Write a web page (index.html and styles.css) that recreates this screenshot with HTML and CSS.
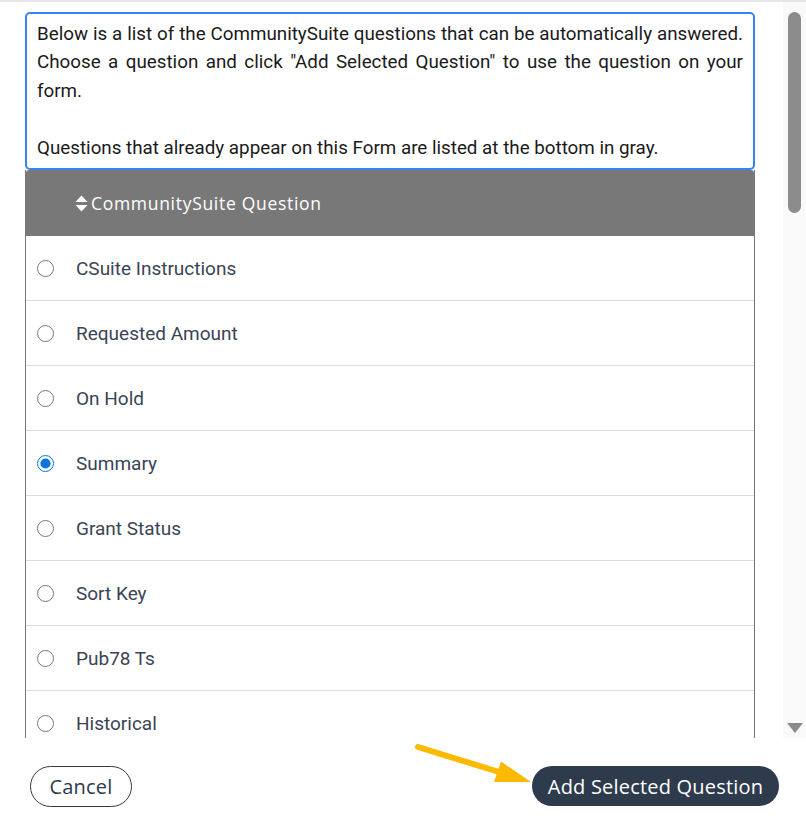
FILE: index.html
```html
<!DOCTYPE html>
<html lang="en">
<head>
<meta charset="utf-8">
<title>Add CommunitySuite Question</title>
<link rel="stylesheet" href="styles.css">
</head>
<body>
<div class="topline"></div>
<div class="viewport">
  <div class="content">
    <div class="intro">
      <p>Below is a list of the CommunitySuite questions that can be automatically answered. Choose a question and click "Add Selected Question" to use the question on your form.</p>
      <p>Questions that already appear on this Form are listed at the bottom in gray.</p>
    </div>
    <div class="qtable">
      <div class="qhead">
        <svg class="sort" viewBox="0 0 13 17" width="13" height="17" aria-hidden="true">
          <path d="M6.5 0.5 L12.5 7 L0.5 7 Z" fill="#fff"/>
          <path d="M0.5 10 L12.5 10 L6.5 16.5 Z" fill="#fff"/>
        </svg>
        <span>CommunitySuite Question</span>
      </div>
      <label class="qrow"><input type="radio" name="q"><span>CSuite Instructions</span></label>
      <label class="qrow"><input type="radio" name="q"><span>Requested Amount</span></label>
      <label class="qrow"><input type="radio" name="q"><span>On Hold</span></label>
      <label class="qrow"><input type="radio" name="q" checked><span>Summary</span></label>
      <label class="qrow"><input type="radio" name="q"><span>Grant Status</span></label>
      <label class="qrow"><input type="radio" name="q"><span>Sort Key</span></label>
      <label class="qrow"><input type="radio" name="q"><span>Pub78 Ts</span></label>
      <label class="qrow"><input type="radio" name="q"><span>Historical</span></label>
    </div>
  </div>
  <div class="scrollbar">
    <div class="thumb"></div>
    <div class="down"></div>
  </div>
</div>
<div class="footer">
  <button class="btn btn-outline">Cancel</button>
  <button class="btn btn-primary">Add Selected Question</button>
  <svg class="arrow" viewBox="0 0 806 86" width="806" height="86" aria-hidden="true">
    <line x1="418" y1="9" x2="499" y2="34" stroke="#fbba00" stroke-width="6" stroke-linecap="round"/>
    <polygon points="501,23.5 494,44 531,44" fill="#fbba00"/>
  </svg>
</div>
</body>
</html>
```

FILE: styles.css
```css
* { box-sizing: border-box; }
html, body { margin: 0; padding: 0; background: #fff; }
body { width: 806px; height: 824px; overflow: hidden; font-family: Roboto, "Liberation Sans", sans-serif; }

.topline { height: 2px; background: #e6e6e6; }

.viewport { display: flex; height: 736px; }
.content { width: 783px; overflow: hidden; padding: 10px 28px 0 25px; }

.intro {
  border: 2px solid #3385f5;
  border-radius: 5px;
  padding: 6px 10px 6px 10px;
  font-size: 18.8px;
  line-height: 28.4px;
  color: #1a1a1a;
  text-align: justify;
}
.intro p { margin: 0; }
.intro p + p { margin-top: 28.4px; }

.qtable { border-left: 1px solid #777; border-right: 1px solid #777; }
.qhead {
  height: 66px;
  background: #787878;
  border-radius: 3px 3px 0 0;
  display: flex;
  align-items: center;
  gap: 3px;
  padding-left: 49px;
  color: #fff;
  font-family: "Open Sans", sans-serif;
  font-weight: 500;
  font-size: 17.5px;
  letter-spacing: 0.7px;
}
.sort { display: block; }

.qrow {
  height: 65px;
  border-bottom: 1px solid #dcdcdc;
  display: flex;
  align-items: center;
  padding-left: 10px;
  font-size: 19px;
  color: #3b4455;
}
.qrow input {
  width: 17px; height: 17px; margin: 0 22px 0 1px;
  accent-color: #0b74de;
}

.scrollbar {
  width: 23px;
  background: #f9f9f9;
  display: flex;
  flex-direction: column;
  align-items: center;
  justify-content: space-between;
  padding: 10px 0 5px 0;
}
.thumb { width: 13px; height: 201px; background: #8c8c8c; border-radius: 7px; }
.down {
  width: 0; height: 0;
  border-left: 8px solid transparent;
  border-right: 8px solid transparent;
  border-top: 10px solid #8a8a8a;
}

.footer {
  position: relative;
  height: 86px;
  display: flex;
  justify-content: space-between;
  align-items: flex-start;
  padding: 28px 27px 0 30px;
}
.btn {
  font-family: "Open Sans", sans-serif;
  font-size: 20px;
  letter-spacing: 0.2px;
  border-radius: 22px;
  cursor: pointer;
  padding: 0;
}
.btn-outline {
  width: 102px; height: 41px;
  background: #fff;
  border: 1px solid #2d3a4b;
  color: #2d3a4b;
}
.btn-primary {
  width: 247px; height: 40px;
  background: #2e3b4c;
  border: none;
  color: #fff;
  font-weight: 500;
}
.arrow { position: absolute; left: 0; top: 0; pointer-events: none; }
```
